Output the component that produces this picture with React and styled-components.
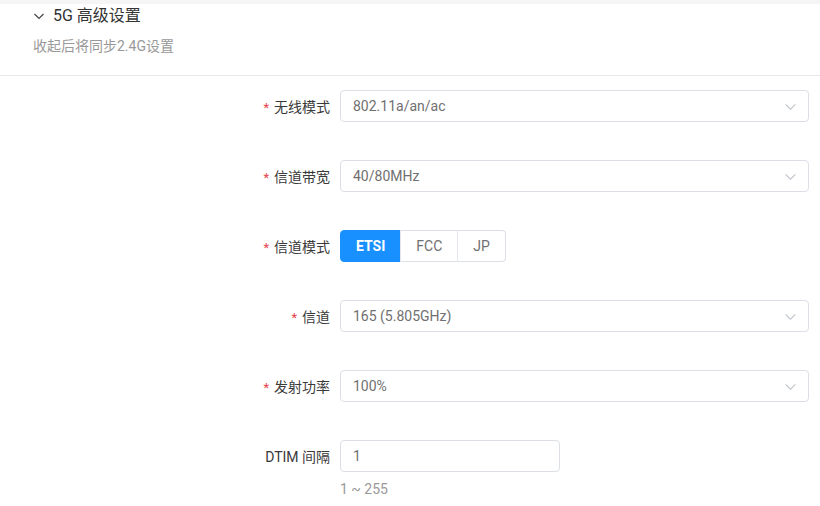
import React, { useState } from 'react'
import styled, { createGlobalStyle } from 'styled-components'

const GlobalStyle = createGlobalStyle`
    body{
        margin: 0;
        background: #f5f5f5;
        font-family: Roboto, "Liberation Sans", "Noto Sans CJK SC", sans-serif;
        color: #333;
    }
`;

const fields = [
    { label: '无线模式', value: '802.11a/an/ac', kind: 'select' },
    { label: '信道带宽', value: '40/80MHz', kind: 'select' },
    { label: '信道模式', kind: 'radio' },
    { label: '信道', value: '165 (5.805GHz)', kind: 'select' },
    { label: '发射功率', value: '100%', kind: 'select' },
]

const Chevron = ({ size = 12, color = '#333', width = 1.2 }) => (
    <svg width={size} height={size} viewBox="0 0 12 12" fill="none">
        <path d="M1.5 4 L6 8.5 L10.5 4" stroke={color} strokeWidth={width} />
    </svg>
)

function App() {
    const [mode, setMode] = useState('ETSI')

    return (
        <>
            <GlobalStyle />
            <PageStyled>
                <div className="card">
                    <Header>
                        <h3>
                            <Chevron size={12} color="#444" width={1.2} />
                            <span>5G 高级设置</span>
                        </h3>
                        <p>收起后将同步2.4G设置</p>
                    </Header>
                    <Form>
                        {fields.map(f => (
                            <Row key={f.label}>
                                <Label required>{f.label}</Label>
                                {f.kind === 'select' ? (
                                    <Select>
                                        <span>{f.value}</span>
                                        <Chevron size={13} color="#c0c4cc" width={1} />
                                    </Select>
                                ) : (
                                    <RadioGroup>
                                        {['ETSI', 'FCC', 'JP'].map(m => (
                                            <RadioButton key={m} active={mode === m} onClick={() => setMode(m)}>
                                                {m}
                                            </RadioButton>
                                        ))}
                                    </RadioGroup>
                                )}
                            </Row>
                        ))}
                        <Row last>
                            <Label>DTIM 间隔</Label>
                            <div>
                                <Input>1</Input>
                                <Hint>1 ~ 255</Hint>
                            </div>
                        </Row>
                    </Form>
                </div>
            </PageStyled>
        </>
    )
}

const PageStyled = styled.div`
    padding-top: 4px;
    .card{
        background: #fff;
        height: 502px;
    }
`;

const Header = styled.div`
    box-sizing: border-box;
    padding: 2px 33px 0;
    height: 72px;
    border-bottom: 1px solid #e8e8e8;
    h3{
        margin: 0;
        display: flex;
        align-items: center;
        gap: 8px;
        font-size: 16px;
        font-weight: 400;
        color: #333;
        line-height: 20px;
    }
    p{
        margin: 11px 0 0;
        font-size: 14px;
        color: #999;
        line-height: 18px;
    }
`;

const Form = styled.div`
    padding-top: 14px;
`;

const Row = styled.div`
    display: grid;
    grid-template-columns: 330px 469px;
    column-gap: 10px;
    align-items: start;
    margin-bottom: ${p => p.last ? 0 : 38}px;
`;

const Label = styled.label`
    height: 32px;
    display: flex;
    align-items: center;
    justify-content: flex-end;
    font-size: 14px;
    color: #3a3a3a;
    &::before{
        content: ${p => p.required ? '"*"' : 'none'};
        color: #e8424a;
        margin-right: 5px;
        font-size: 13px;
        position: relative;
        top: 1px;
    }
`;

const Select = styled.div`
    box-sizing: border-box;
    height: 32px;
    border: 1px solid #dcdfe6;
    border-radius: 4px;
    padding: 0 11px 0 12px;
    display: flex;
    align-items: center;
    justify-content: space-between;
    font-size: 14px;
    color: #707070;
`;

const RadioGroup = styled.div`
    display: flex;
    height: 32px;
`;

const RadioButton = styled.div`
    box-sizing: border-box;
    height: 32px;
    padding: 0 15px;
    display: flex;
    align-items: center;
    font-size: 14px;
    cursor: pointer;
    font-weight: ${p => p.active ? 700 : 400};
    color: ${p => p.active ? '#fff' : '#707070'};
    background: ${p => p.active ? '#1890ff' : '#fff'};
    border: 1px solid ${p => p.active ? '#1890ff' : '#dcdfe6'};
    & + &{
        border-left: ${p => p.active ? '1px solid #1890ff' : '1px solid #e4e7ed'};
        margin-left: -1px;
    }
    &:first-child{ border-radius: 4px 0 0 4px; }
    &:last-child{ border-radius: 0 4px 4px 0; }
`;

const Input = styled.div`
    box-sizing: border-box;
    width: 220px;
    height: 32px;
    border: 1px solid #dcdfe6;
    border-radius: 4px;
    padding: 0 12px;
    display: flex;
    align-items: center;
    font-size: 14px;
    color: #707070;
`;

const Hint = styled.div`
    margin-top: 7px;
    font-size: 14px;
    color: #999;
    line-height: 20px;
`;

export default App
